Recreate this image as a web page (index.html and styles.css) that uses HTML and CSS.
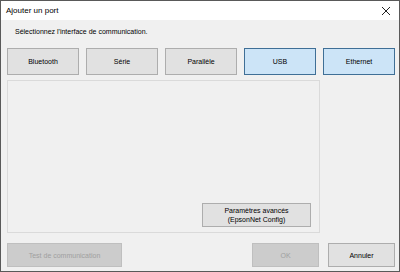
FILE: index.html
```html
<!DOCTYPE html>
<html lang="fr">

<head>
    <meta charset="UTF-8">
    <meta name="viewport" content="width=device-width, initial-scale=1.0">
    <title>Ajouter un port</title>
    <link rel="stylesheet" href="styles.css">
</head>

<body>
    <main class="window">
        <header class="titlebar">
            <span class="caption">Ajouter un port</span>
            <button class="close" aria-label="Fermer">
                <svg width="10" height="10" viewBox="0 0 10 10">
                    <path d="M1 1 L9 9 M9 1 L1 9" stroke="#222" stroke-width="1" fill="none" />
                </svg>
            </button>
        </header>

        <section class="content">
            <p class="prompt">Sélectionnez l'interface de communication.</p>

            <div class="ports">
                <button class="btn">Bluetooth</button>
                <button class="btn">Série</button>
                <button class="btn">Parallèle</button>
                <button class="btn checked">USB</button>
                <button class="btn checked">Ethernet</button>
            </div>

            <div class="panel">
                <button class="btn advanced">Paramètres avancés<br>(EpsonNet Config)</button>
            </div>

            <footer class="actions">
                <button class="btn test" disabled>Test de communication</button>
                <span class="spacer"></span>
                <button class="btn small" disabled>OK</button>
                <button class="btn small">Annuler</button>
            </footer>
        </section>
    </main>
</body>

</html>
```

FILE: styles.css
```css
* {
    margin: 0;
    padding: 0;
    box-sizing: border-box;
}

body {
    width: 400px;
    height: 272px;
    font-family: "Liberation Sans", Arial, sans-serif;
    font-size: 7px;
    color: #000;
}

.window {
    width: 400px;
    height: 272px;
    border: 1px solid #595959;
    background-color: #f0f0f0;

    display: flex;
    flex-direction: column;
}

.titlebar {
    height: 19px;
    background-color: #fff;

    display: flex;
    align-items: center;
    justify-content: space-between;
    padding-left: 5px;
}

.caption {
    font-size: 8px;
}

.close {
    width: 26px;
    height: 19px;
    border: none;
    background: none;

    display: flex;
    align-items: center;
    justify-content: center;
}

.content {
    flex: 1;
    padding: 0 4px 0 6px;

    display: flex;
    flex-direction: column;
}

.prompt {
    margin: 7px 0 0 8px;
    height: 10px;
    line-height: 10px;
}

.ports {
    display: grid;
    grid-template-columns: repeat(5, 72px);
    gap: 7px;
    margin-top: 11px;
}

.btn {
    font: inherit;
    color: #000;
    background-color: #e1e1e1;
    border: 1px solid #adadad;
}

.ports .btn {
    height: 27px;
}

.btn.checked {
    background-color: #cce4f7;
    border-color: #3f6f96;
}

.btn:disabled {
    background-color: #cccccc;
    border-color: #bfbfbf;
    color: #a0a0a0;
}

.panel {
    width: 313px;
    height: 153px;
    margin-top: 5px;
    border: 1px solid #dadada;

    display: flex;
    align-items: flex-end;
    justify-content: flex-end;
    padding: 0 8px 5px 0;
}

.advanced {
    width: 109px;
    height: 24px;
    line-height: 9px;
}

.actions {
    display: flex;
    gap: 9px;
    margin-top: 10px;
}

.actions .btn {
    height: 24px;
}

.test {
    width: 115px;
}

.spacer {
    flex: 1;
}

.small {
    width: 67px;
}
```
